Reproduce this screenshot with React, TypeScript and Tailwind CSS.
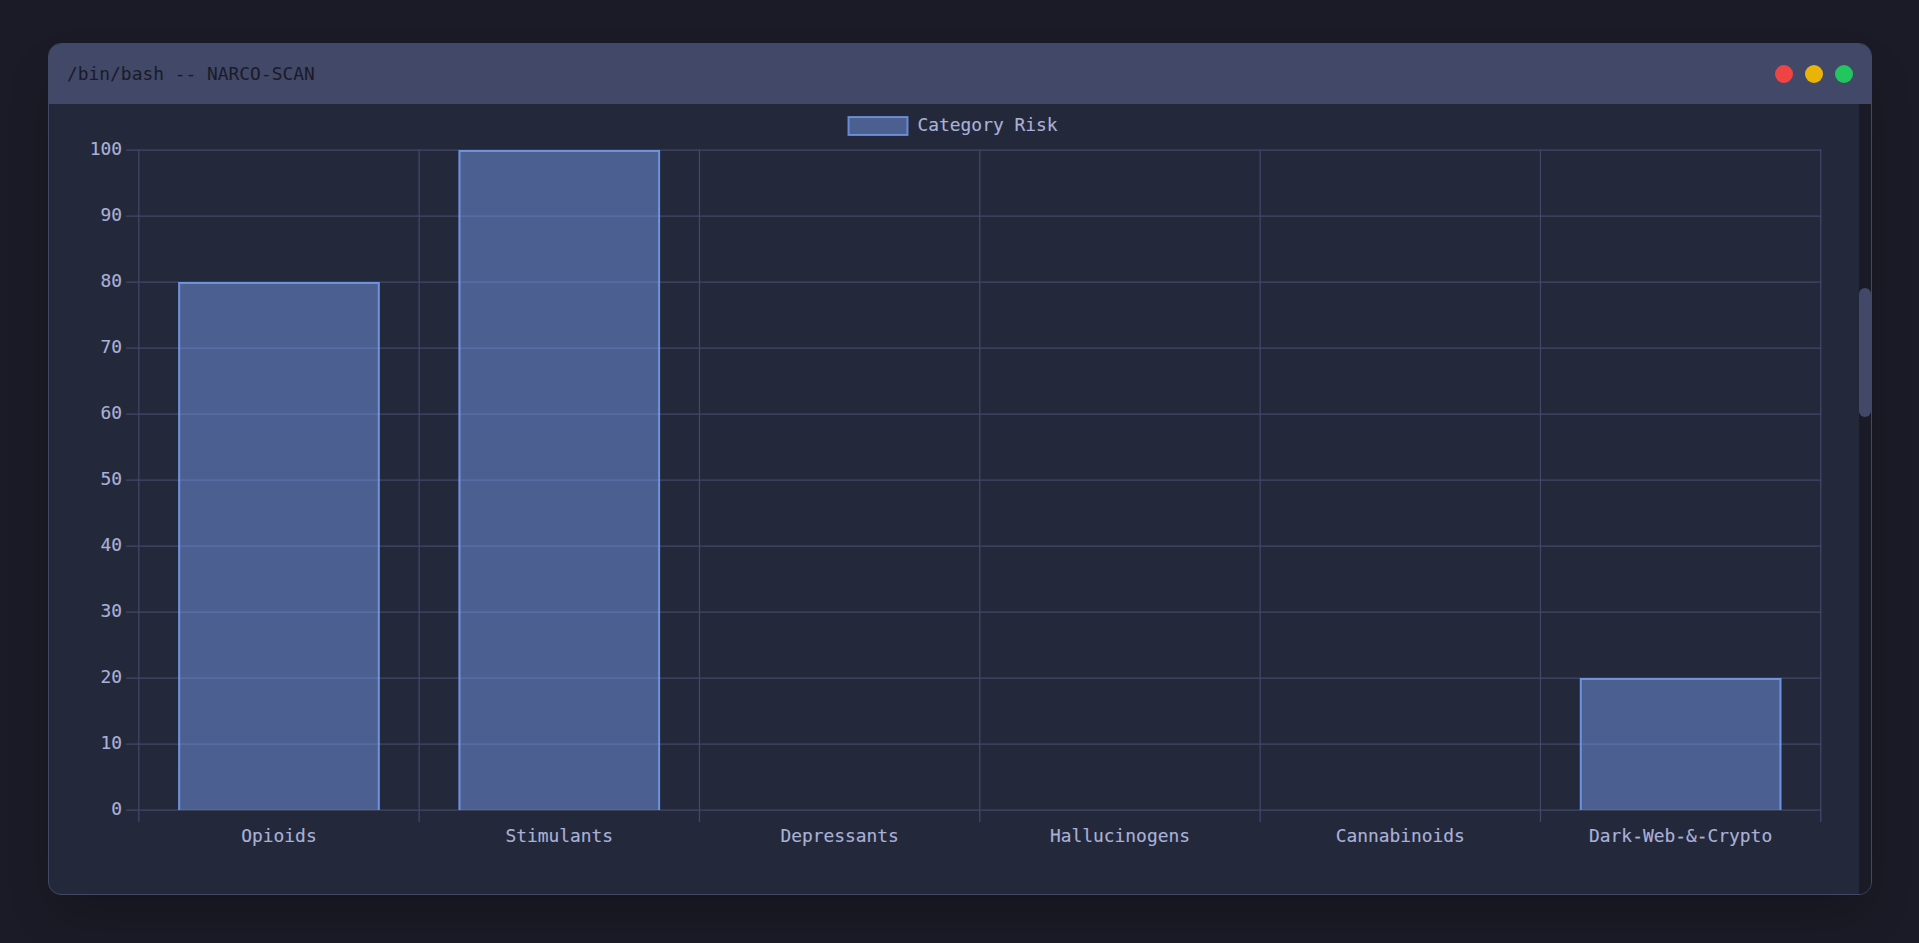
const mono = "font-['DejaVu_Sans_Mono','Liberation_Mono',monospace]";

const categories = [
  { name: "Opioids", risk: 80 },
  { name: "Stimulants", risk: 100 },
  { name: "Depressants", risk: 0 },
  { name: "Hallucinogens", risk: 0 },
  { name: "Cannabinoids", risk: 0 },
  { name: "Dark-Web-&-Crypto", risk: 20 },
];

const ticks = [100, 90, 80, 70, 60, 50, 40, 30, 20, 10, 0];

const LEFT = 138.8;
const STEP_X = 280.33;
const TOP = 150;
const STEP_Y = 66;
const BOTTOM = TOP + STEP_Y * 10;
const RIGHT = LEFT + STEP_X * 6;
const BAR = 201.6;

function Chart() {
  return (
    <svg viewBox="49 104 1810 790" className="block w-full h-full">
      <g stroke="#414868" strokeWidth="1.25">
        {ticks.map((t, i) => (
          <line key={t} x1={126} x2={RIGHT + 0.6} y1={TOP + i * STEP_Y} y2={TOP + i * STEP_Y} />
        ))}
        {categories.concat({ name: "end", risk: 0 }).map((c, i) => {
          const x = LEFT + i * STEP_X;
          return <line key={c.name} x1={x} x2={x} y1={TOP - 0.6} y2={822} />;
        })}
      </g>
      {categories.map((c, i) => {
        if (!c.risk) return null;
        const cx = LEFT + STEP_X * i + STEP_X / 2;
        const x1 = cx - BAR / 2;
        const x2 = cx + BAR / 2;
        const y = BOTTOM - (c.risk / 10) * STEP_Y;
        return (
          <g key={c.name}>
            <rect x={x1} y={y} width={BAR} height={BOTTOM - y} fill="#7aa2f7" fillOpacity="0.46" />
            <path
              d={`M${x1 + 1} ${BOTTOM}V${y + 1}H${x2 - 1}V${BOTTOM}`}
              fill="none"
              stroke="#7aa2f7"
              strokeOpacity="0.75"
              strokeWidth="2"
            />
          </g>
        );
      })}
      <g fill="#a9b1d6" fontSize="17.9" fontFamily="'DejaVu Sans Mono','Liberation Mono',monospace">
        {ticks.map((t, i) => (
          <text key={t} x={122} y={TOP + i * STEP_Y + 5} stroke="#a9b1d6" strokeWidth="0.15" textAnchor="end">
            {t}
          </text>
        ))}
        {categories.map((c, i) => (
          <text key={c.name} x={LEFT + STEP_X * i + STEP_X / 2} y={842} stroke="#a9b1d6" strokeWidth="0.15" textAnchor="middle">
            {c.name}
          </text>
        ))}
        <rect x={848.5} y={117} width={59} height={18} fill="#7aa2f7" fillOpacity="0.46" stroke="#7aa2f7" strokeOpacity="0.75" strokeWidth="2" />
        <text x={917.5} y={131} stroke="#a9b1d6" strokeWidth="0.15">
          Category Risk
        </text>
      </g>
    </svg>
  );
}

export default function App() {
  return (
    <div className="h-[943px] bg-[#1a1b26] pt-[43px] pb-[48px] pl-[48px] pr-[47px] overflow-hidden">
      <div className="flex flex-col h-full rounded-[13px] overflow-hidden border border-[#414868] bg-[#24283b] shadow-2xl">
        <div className="flex items-center justify-between h-[60px] shrink-0 bg-[#414868] pl-[18px] pr-[18px]">
          <span className={`${mono} text-[17.9px] text-[#1a1b26]`}>/bin/bash -- NARCO-SCAN</span>
          <div className="flex gap-3">
            <span className="size-[18px] rounded-full bg-[#ef4444]" />
            <span className="size-[18px] rounded-full bg-[#eab308]" />
            <span className="size-[18px] rounded-full bg-[#22c55e]" />
          </div>
        </div>
        <div className="flex flex-1 min-h-0">
          <div className="flex-1 min-w-0">
            <Chart />
          </div>
          <div className="w-[12px] bg-[#1a1b26] pt-[184px]">
            <div className="h-[129px] rounded-full bg-[#414868]" />
          </div>
        </div>
      </div>
    </div>
  );
}
